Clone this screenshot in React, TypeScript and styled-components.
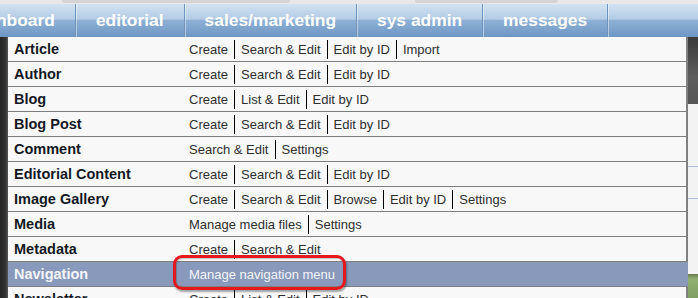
import React from "react";
import styled, { createGlobalStyle } from "styled-components";

const Global = createGlobalStyle`
  html, body { margin: 0; padding: 0; }
  body {
    background: #f2f2f2;
    overflow: hidden;
    font-family: "Liberation Sans", Arial, Helvetica, sans-serif;
  }
`;

const Page = styled.div`
  width: 698px;
  height: 298px;
  overflow: hidden;
  display: flex;
  flex-direction: column;
`;

const TopStrip = styled.div`
  height: 4px;
  background: #e8e8e8;
  display: flex;
  gap: 0;
`;

const StripBlock = styled.div<{ $w: number; $ml: number }>`
  width: ${(p) => p.$w}px;
  margin-left: ${(p) => p.$ml}px;
  height: 3px;
  background: #d4d4d4;
  border-radius: 0 0 3px 3px;
`;

const NavBar = styled.div`
  height: 33px;
  display: flex;
  background: linear-gradient(
    to bottom,
    #d2e2f3 0%,
    #b3cbe5 46%,
    #8eb0d5 50%,
    #6e97c4 100%
  );
  overflow: hidden;
`;

const Tabs = styled.div`
  display: flex;
  margin-left: -54px;
`;

const Tab = styled.div`
  padding: 0 20px;
  display: flex;
  align-items: center;
  color: #ffffff;
  font-weight: bold;
  font-size: 17.4px;
  white-space: nowrap;
  border-right: 1px solid #6e93bd;
  box-shadow: inset 1px 0 0 rgba(255, 255, 255, 0.45);
`;

const Main = styled.div`
  flex: 1;
  display: flex;
  min-height: 0;
`;

const LeftGutter = styled.div`
  width: 8px;
  background: linear-gradient(to right, #262626 0%, #333 70%, #5a5a5a 100%);
`;

const Panel = styled.div`
  width: 678px;
  background: #f8f8f8;
  border-right: 2px solid #808080;
  position: relative;
`;

const Row = styled.div<{ $active?: boolean }>`
  height: 24px;
  display: flex;
  align-items: center;
  border-bottom: 1px solid #7e7e7e;
  padding-left: 6px;
  background: ${(p) => (p.$active ? "#8899bb" : "transparent")};
  margin-right: ${(p) => (p.$active ? "-2px" : "0")};
`;

const Label = styled.div<{ $active?: boolean }>`
  width: 175px;
  font-weight: bold;
  font-size: 14.5px;
  color: ${(p) => (p.$active ? "#f4f6fa" : "#141824")};
  white-space: nowrap;
`;

const Actions = styled.div`
  display: flex;
  align-items: center;
  position: relative;
  height: 100%;
`;

const Action = styled.span<{ $first?: boolean; $active?: boolean }>`
  font-size: 13px;
  line-height: 19px;
  color: ${(p) => (p.$active ? "#f2f4f8" : "#2f2f2f")};
  padding: ${(p) => (p.$first ? "0 6px 0 0" : "0 6px")};
  border-left: ${(p) => (p.$first ? "none" : "1px solid #000")};
  white-space: nowrap;
`;

const Ring = styled.div`
  position: absolute;
  left: -16px;
  top: -7px;
  width: 167px;
  height: 29px;
  border: 3px solid #e3191d;
  border-radius: 9px;
  box-shadow: 1px 2px 2px rgba(0, 0, 0, 0.35),
    inset 1px 1px 1px rgba(0, 0, 0, 0.2);
  pointer-events: none;
`;

const RightGutter = styled.div`
  flex: 1;
  display: flex;
  flex-direction: column;
  background: #f3f3f3;
`;

const DarkBlock = styled.div`
  height: 67px;
  background: linear-gradient(to bottom, #3a3a3a 0%, #5e5e5e 60%, #555 100%);
`;

const Filler = styled.div<{ $h: number }>`
  height: ${(p) => p.$h}px;
`;

const BlueLine = styled.div`
  height: 1px;
  background: #a9bfd3;
`;

const GreenBlock = styled.div`
  flex: 1;
  background: linear-gradient(to bottom, #6d7a50 0%, #8fb070 20%, #7fa062 100%);
`;

type RowData = { label: string; actions: string[]; active?: boolean };

const rows: RowData[] = [
  { label: "Article", actions: ["Create", "Search & Edit", "Edit by ID", "Import"] },
  { label: "Author", actions: ["Create", "Search & Edit", "Edit by ID"] },
  { label: "Blog", actions: ["Create", "List & Edit", "Edit by ID"] },
  { label: "Blog Post", actions: ["Create", "Search & Edit", "Edit by ID"] },
  { label: "Comment", actions: ["Search & Edit", "Settings"] },
  { label: "Editorial Content", actions: ["Create", "Search & Edit", "Edit by ID"] },
  {
    label: "Image Gallery",
    actions: ["Create", "Search & Edit", "Browse", "Edit by ID", "Settings"],
  },
  { label: "Media", actions: ["Manage media files", "Settings"] },
  { label: "Metadata", actions: ["Create", "Search & Edit"] },
  { label: "Navigation", actions: ["Manage navigation menu"], active: true },
  { label: "Newsletter", actions: ["Create", "List & Edit", "Edit by ID"] },
];

const tabs = ["dashboard", "editorial", "sales/marketing", "sys admin", "messages", ""];

export default function App() {
  return (
    <>
      <Global />
      <Page>
        <TopStrip>
          <StripBlock $w={228} $ml={62} />
          <StripBlock $w={143} $ml={125} />
        </TopStrip>
        <NavBar>
          <Tabs>
            {tabs.map((t, i) => (
              <Tab key={i}>{t || "\u00a0".repeat(30)}</Tab>
            ))}
          </Tabs>
        </NavBar>
        <Main>
          <LeftGutter />
          <Panel>
            {rows.map((r) => (
              <Row key={r.label} $active={r.active}>
                <Label $active={r.active}>{r.label}</Label>
                <Actions>
                  {r.actions.map((a, i) => (
                    <Action key={a} $first={i === 0} $active={r.active}>
                      {a}
                    </Action>
                  ))}
                  {r.active && <Ring />}
                </Actions>
              </Row>
            ))}
          </Panel>
          <RightGutter>
            <DarkBlock />
            <Filler $h={62} />
            <BlueLine />
            <Filler $h={31} />
            <BlueLine />
            <Filler $h={75} />
            <GreenBlock />
          </RightGutter>
        </Main>
      </Page>
    </>
  );
}
